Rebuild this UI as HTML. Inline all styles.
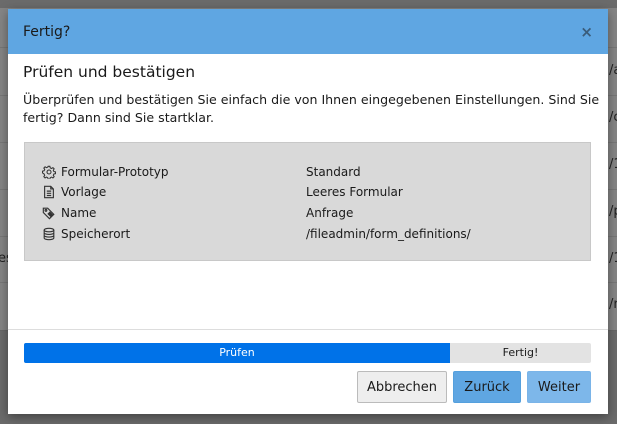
<!DOCTYPE html>
<html><head><meta charset="utf-8"><style>
*{box-sizing:border-box;margin:0;padding:0}
body{width:617px;height:424px;overflow:hidden;background:#6b6b6b;font-family:"DejaVu Sans","Liberation Sans",sans-serif;position:relative;color:#1a1a1a}
.bgr{position:absolute;left:0;right:0;background:#858585;top:8px;height:322px}
.ln{position:absolute;left:0;right:0;height:1px;background:#777}
.bt{position:absolute;font-size:13px;color:#222}
.modal{position:absolute;left:8px;top:9px;width:600px;height:405px;background:#fff;box-shadow:0 3px 10px rgba(0,0,0,.4)}
.hd{height:45px;background:#5fa6e2;padding:0 15px;display:flex;align-items:center;justify-content:space-between;font-size:14px;color:#1a1a1a}
.hd .x{font-weight:bold;color:#3a5c7a;font-size:15px}
h2{position:absolute;left:15px;top:54px;font-size:15.5px;font-weight:normal}
p{position:absolute;left:15px;top:82px;width:585px;font-size:12.6px;line-height:18px}
.box{position:absolute;left:16px;top:133px;width:567px;height:119px;background:#d9d9d9;border:1px solid #c8c8c8}
.row{position:absolute;left:17px;font-size:12px;height:16px;display:flex;align-items:center}
.row svg{width:14px;height:14px;margin-right:5px}
.val{position:absolute;left:281px;font-size:12px}
.ft{position:absolute;left:0;right:0;top:320px;border-top:1px solid #ddd}
.pb{position:absolute;left:16px;top:334px;width:567px;height:20px;background:#e3e3e3;border-radius:2px;font-size:11px}
.pb .a{position:absolute;left:0;top:0;width:426px;height:20px;background:#0072e8;color:#fff;text-align:center;line-height:20px;border-radius:2px 0 0 2px}
.pb .b{position:absolute;left:426px;right:0;top:0;text-align:center;line-height:20px}
.btn{position:absolute;top:362px;height:32px;font-size:13px;display:flex;align-items:center;justify-content:center;border-radius:2px}
</style></head><body>
<div class="bgr"></div>
<div class="ln" style="top:47px"></div><div class="ln" style="top:95px"></div><div class="ln" style="top:142px"></div><div class="ln" style="top:189px"></div><div class="ln" style="top:236px"></div><div class="ln" style="top:282px"></div><div class="ln" style="top:330px;background:#666"></div>
<div class="bt" style="left:609px;top:63px">/a</div><div class="bt" style="left:609px;top:110px">/c</div><div class="bt" style="left:609px;top:157px">/1</div><div class="bt" style="left:609px;top:204px">/p</div><div class="bt" style="left:609px;top:251px">/1</div><div class="bt" style="left:609px;top:297px">/r</div>
<div class="bt" style="left:-10px;top:251px">ees</div>
<div class="modal">
<div class="hd"><span>Fertig?</span><span class="x">×</span></div>
<h2>Prüfen und bestätigen</h2>
<p>Überprüfen und bestätigen Sie einfach die von Ihnen eingegebenen Einstellungen. Sind Sie fertig? Dann sind Sie startklar.</p>
<div class="box">
<div class="row" style="top:21px"><svg viewBox="0 0 16 16" fill="none" stroke="#333" stroke-width="1.2"><circle cx="8" cy="8" r="2.3"/><path d="M7 1.5h2l.4 1.8 1.5.7 1.6-1 1.4 1.4-1 1.6.7 1.5 1.8.4v2l-1.8.4-.7 1.5 1 1.6-1.4 1.4-1.6-1-1.5.7-.4 1.8H7l-.4-1.8-1.5-.7-1.6 1-1.4-1.4 1-1.6-.7-1.5L.6 9V7l1.8-.4.7-1.5-1-1.6 1.4-1.4 1.6 1 1.5-.7z"/></svg>Formular-Prototyp</div>
<div class="row" style="top:41px"><svg viewBox="0 0 16 16" fill="none" stroke="#333" stroke-width="1.3"><path d="M3 1.5h7l3 3v10H3z M10 1.5v3h3 M5.5 7h5 M5.5 9.5h5 M5.5 12h5"/></svg>Vorlage</div>
<div class="row" style="top:62px"><svg viewBox="0 0 16 16" fill="none" stroke="#333" stroke-width="1.3"><path d="M1.5 2.5v5l7 7 5-5-7-7z"/><circle cx="4.5" cy="5" r="1"/><path d="M7 9l3 3 2-2-3-3z" fill="#333"/></svg>Name</div>
<div class="row" style="top:83px"><svg viewBox="0 0 16 16" fill="none" stroke="#333" stroke-width="1.3"><ellipse cx="8" cy="3.5" rx="5.5" ry="2"/><path d="M2.5 3.5v9c0 1.1 2.5 2 5.5 2s5.5-.9 5.5-2v-9 M2.5 6.5c0 1.1 2.5 2 5.5 2s5.5-.9 5.5-2 M2.5 9.5c0 1.1 2.5 2 5.5 2s5.5-.9 5.5-2"/></svg>Speicherort</div>
<div class="val" style="top:22px">Standard</div>
<div class="val" style="top:42px">Leeres Formular</div>
<div class="val" style="top:63px">Anfrage</div>
<div class="val" style="top:84px">/fileadmin/form_definitions/</div>
</div>
<div class="ft"></div>
<div class="pb"><div class="a">Prüfen</div><div class="b">Fertig!</div></div>
<div class="btn" style="left:349px;width:90px;background:#eee;border:1px solid #bbb">Abbrechen</div>
<div class="btn" style="left:445px;width:68px;background:#5fa6e2;border:1px solid #55a0dd">Zurück</div>
<div class="btn" style="left:519px;width:64px;background:#7db7ea;border:1px solid #7ab4e8">Weiter</div>
</div>
</body></html>
